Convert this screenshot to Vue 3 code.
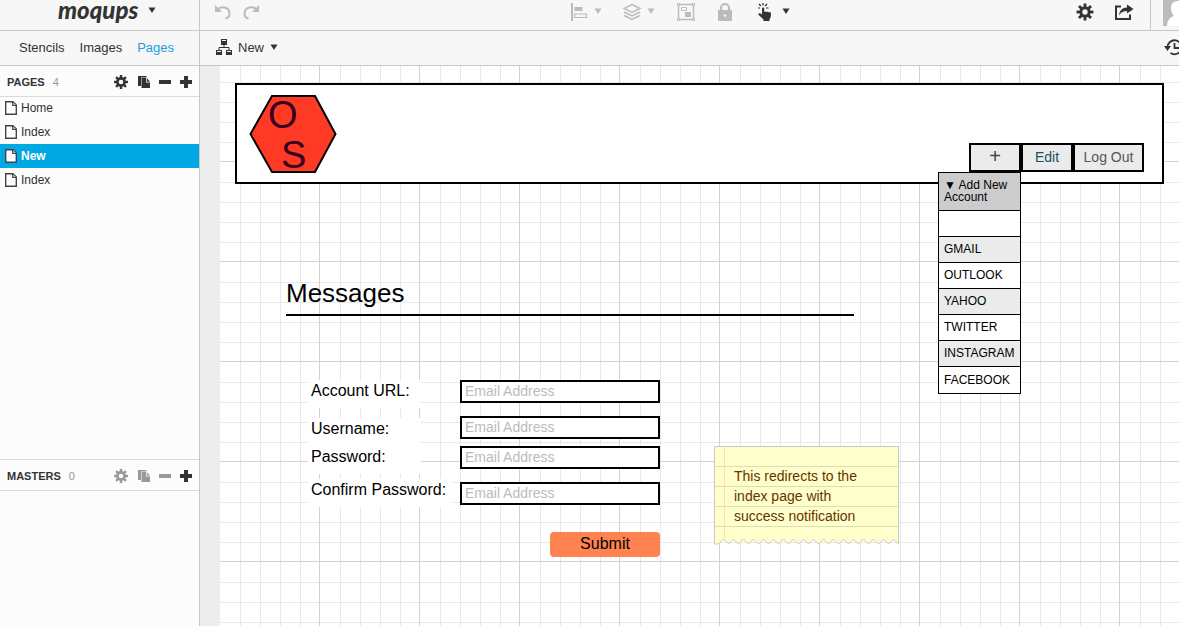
<script setup>
import { ref } from 'vue'

const gearTeeth = [0, 45, 90, 135, 180, 225, 270, 315]

const tabs = ['Stencils', 'Images', 'Pages']
const activeTab = ref('Pages')

const pages = ['Home', 'Index', 'New', 'Index']
const activePage = ref(2)

const panels = [
  { key: 'pages', title: 'PAGES', count: 4, muted: false, rows: pages },
  { key: 'masters', title: 'MASTERS', count: 0, muted: true, rows: [] },
]

const navButtons = ['+', 'Edit', 'Log Out']
const menuItems = ['', 'GMAIL', 'OUTLOOK', 'YAHOO', 'TWITTER', 'INSTAGRAM', 'FACEBOOK']

const fields = [
  { id: 'url', label: 'Account URL:', type: 'text', labelTop: 314, top: 314, width: 113 },
  { id: 'user', label: 'Username:', type: 'text', labelTop: 352, top: 350, width: 113 },
  { id: 'pass', label: 'Password:', type: 'password', labelTop: 380, top: 380, width: 113 },
  { id: 'confirm', label: 'Confirm Password:', type: 'password', labelTop: 413, top: 416, width: 144 },
]

const tornEdge = Array.from({ length: 37 }, (_, i) => `L${184.5 - i * 5} ${i % 2 ? 93 : 98}`).join(' ')
</script>

<template>
  <div class="app">
    <aside class="side">
      <button class="brand" type="button">
        <span class="wordmark">moqups</span>
        <svg class="caret" viewBox="0 0 8 6"><path d="M0.5 0.5h7L4 6z" /></svg>
      </button>
      <nav class="tabs">
        <a
          v-for="tab in tabs"
          :key="tab"
          href="#"
          :class="{ on: tab === activeTab }"
          @click.prevent="activeTab = tab"
        >{{ tab }}</a>
      </nav>
      <section v-for="panel in panels" :key="panel.key" :class="['panel', panel.key]">
        <header class="panel-head">
          <h2>{{ panel.title }}</h2>
          <span class="count">{{ panel.count }}</span>
          <div class="tools">
            <button type="button" aria-label="Settings" :class="{ muted: panel.muted }">
              <svg width="16" height="14" viewBox="0 0 16 14">
                <g transform="translate(7 7)">
                  <circle r="3.6" fill="none" stroke="currentColor" stroke-width="2.6" />
                  <rect v-for="a in gearTeeth" :key="a" x="-1.2" y="-7" width="2.4" height="3" :transform="`rotate(${a})`" />
                </g>
              </svg>
            </button>
            <button type="button" aria-label="Duplicate" :class="{ muted: panel.muted }">
              <svg width="14" height="14" viewBox="0 0 14 14">
                <path d="M1 1h8.500v1.500H4V11H1z" />
                <path d="M4.500 3H9v4.500h4V13H4.500zM9.700 3L13 6.700H9.700z" />
              </svg>
            </button>
            <button type="button" aria-label="Remove" :class="{ muted: panel.muted }">
              <svg width="14" height="14" viewBox="0 0 14 14"><path d="M1 5h12v4H1z" /></svg>
            </button>
            <button type="button" aria-label="Add">
              <svg width="14" height="14" viewBox="0 0 14 14"><path d="M5 1h4v4h4v4H9v4H5V9H1V5h4z" /></svg>
            </button>
          </div>
        </header>
        <ul class="rows">
          <li v-for="(name, i) in panel.rows" :key="i">
            <button type="button" :class="{ on: i === activePage }" @click="activePage = i">
              <svg width="12" height="14" viewBox="0 0 12 14">
                <path d="M.7.7h7.3l3.3 3.3v9.3H.7z" fill="#fff" stroke="#444" stroke-width="1.4" />
                <path d="M7.5.7v3.8h3.8" fill="#bbb" stroke="#444" />
              </svg>
              {{ name }}
            </button>
          </li>
        </ul>
      </section>
    </aside>

    <div class="work">
      <div class="toolbar">
        <div class="history">
          <button type="button" aria-label="Undo">
            <svg width="18" height="16" viewBox="0 0 18 16">
              <path d="M3.5 5.5C7 1.5 15.5 3 15.5 9.500C15.500 12 14 14 11.500 14.500" fill="none" stroke="#bbb" stroke-width="2" />
              <path d="M1 1v7h7z" fill="#bbb" />
            </svg>
          </button>
          <button type="button" aria-label="Redo">
            <svg width="18" height="16" viewBox="0 0 18 16">
              <path d="M14.500 5.500C11 1.500 2.500 3 2.500 9.500C2.500 12 4 14 6.500 14.500" fill="none" stroke="#bbb" stroke-width="2" />
              <path d="M17 1v7h-7z" fill="#bbb" />
            </svg>
          </button>
        </div>
        <div class="arrange">
          <button type="button" aria-label="Align" class="dim">
            <svg width="20" height="20" viewBox="0 0 20 20">
              <path d="M1 1h2v18H1zM4.500 5h8v4h-8z" />
              <path d="M4.500 12h12v3.500h-12z" fill="none" stroke="currentColor" stroke-width="1.200" />
            </svg>
            <svg class="caret" viewBox="0 0 8 6"><path d="M0.5 0.5h7L4 6z" /></svg>
          </button>
          <button type="button" aria-label="Order" class="dim">
            <svg width="20" height="20" viewBox="0 0 20 20">
              <g fill="none" stroke="currentColor" stroke-width="1.500">
                <path d="M9 2.500l8 4-8 4-8-4z" />
                <path d="M1 10l8 4 8-4M1 13.500l8 4 8-4" />
              </g>
            </svg>
            <svg class="caret" viewBox="0 0 8 6"><path d="M0.5 0.5h7L4 6z" /></svg>
          </button>
          <button type="button" aria-label="Group" class="dim">
            <svg width="20" height="20" viewBox="0 0 20 20">
              <g fill="#f7f7f7" stroke="currentColor">
                <path d="M2.500 2.500h15v15h-15z" stroke-width="1.400" />
                <path d="M1.500 1.500h2v2h-2zM16.500 1.500h2v2h-2zM1.500 16.500h2v2h-2zM16.500 16.500h2v2h-2zM5.500 5.500h5v3h-5z" />
              </g>
              <path d="M9 10h6v5H9z" />
            </svg>
          </button>
          <button type="button" aria-label="Lock" class="dim">
            <svg width="20" height="20" viewBox="0 0 20 20">
              <path d="M4 9V6a4 4 0 0 1 8 0v3" fill="none" stroke="currentColor" stroke-width="2.200" />
              <rect x="1" y="8" width="14" height="11" rx="1" />
              <circle cx="8" cy="13.500" r="1.300" fill="#f7f7f7" />
            </svg>
          </button>
          <button type="button" aria-label="Interact">
            <svg width="20" height="20" viewBox="0 0 20 20">
              <path d="M4 6.500c0-1.500 2.200-1.500 2.200 0V10l.8-.6 1.300.7.900-.5 1.300.7 1-.2c1.200.2 1.500 1 1.500 2.200 0 3-.8 4-1.500 5V19H5.500v-1.500L.5 12.800C0 11.500 1.500 10.900 2.500 11.600L4 12.500z" />
              <path d="M5 1v2.500M1 2l1.800 2M9 2L7.200 4M-.5 6h2.500M8 6h2.500" fill="none" stroke="currentColor" stroke-width="1.200" />
            </svg>
            <svg class="caret" viewBox="0 0 8 6"><path d="M0.5 0.5h7L4 6z" /></svg>
          </button>
        </div>
        <div class="account">
          <button type="button" aria-label="Preferences">
            <svg width="18" height="18" viewBox="-9 -9 18 18">
              <circle r="4.200" fill="none" stroke="currentColor" stroke-width="3" />
              <rect v-for="a in gearTeeth" :key="a" x="-1.400" y="-8.500" width="2.800" height="4" :transform="`rotate(${a})`" />
            </svg>
          </button>
          <button type="button" aria-label="Share">
            <svg width="20" height="18" viewBox="0 0 20 18">
              <path d="M7 3.500H2v12.500h14V11.500" fill="none" stroke="currentColor" stroke-width="2" />
              <path d="M13 1.500l6.500 4.500-6.500 4.500V8C9.500 8 7 9 5 12.500 5.500 7.500 8.500 4.500 13 4.500z" />
            </svg>
          </button>
          <button type="button" aria-label="Profile" class="avatar">
            <svg width="28" height="27" viewBox="0 0 28 27">
              <path d="M0 0h28v26H0z" fill="#bcbcbc" />
              <path d="M4 26c0-5 3-9 7-10-2-2-3-5-3-8 0-5 3-7 7-7s7 3 7 7-1 6-3 8c4 1 6 5 6 10z" fill="#fff" />
            </svg>
          </button>
        </div>
      </div>

      <div class="pagebar">
        <button type="button" class="page-picker">
          <svg width="16" height="16" viewBox="0 0 16 16">
            <path d="M5 0h6v6H5zM0 11h6v5H0zM10 11h6v5h-6z" />
            <path d="M6 1.500h4M1 12.500h4M11 12.500h4" stroke="#f7f7f7" />
            <path d="M8 6v2.500M3 11V8.500h10V11" fill="none" stroke="currentColor" />
          </svg>
          New
          <svg class="caret" viewBox="0 0 8 6"><path d="M0.5 0.5h7L4 6z" /></svg>
        </button>
        <button type="button" aria-label="Revisions" class="revisions">
          <svg width="20" height="18" viewBox="0 0 20 18">
            <path d="M3.500 9.500A7 7 0 1 1 6.500 15" fill="none" stroke="currentColor" stroke-width="1.800" />
            <path d="M0 8h7l-3.500 5z" />
            <path d="M10.500 5v5H15" fill="none" stroke="currentColor" stroke-width="1.800" />
          </svg>
        </button>
      </div>

      <main class="stage">
        <div class="paper">
          <div class="banner"></div>
          <svg class="badge" width="90" height="82" viewBox="0 0 90 82">
            <path d="M2.500 41L24 3h43l20.500 38L67 79H24z" fill="#ff3a24" stroke="#000" stroke-width="2" />
            <text x="20" y="35">O</text>
            <text x="33" y="75">S</text>
          </svg>
          <nav class="site-nav">
            <button v-for="label in navButtons" :key="label" type="button">{{ label }}</button>
          </nav>
          <div class="menu">
            <button type="button" class="menu-head">▼ Add New Account</button>
            <button v-for="item in menuItems" :key="item" type="button">{{ item }}</button>
          </div>
          <h1>Messages</h1>
          <form @submit.prevent>
            <template v-for="f in fields" :key="f.id">
              <label :for="f.id" :style="{ top: f.labelTop + 'px', width: f.width + 'px' }">{{ f.label }}</label>
              <input :id="f.id" :type="f.type" placeholder="Email Address" :style="{ top: f.top + 'px' }" />
            </template>
            <button type="submit" class="submit">Submit</button>
          </form>
          <div class="note">
            <svg width="185" height="100" viewBox="0 0 185 100">
              <path :d="`M.5 98V.5H184.500V93 ${tornEdge}Z`" fill="#ffffcb" stroke="#c8c8c0" />
              <path d="M1 20.500h183M1 40.500h183M1 60.500h183M1 80.500h183" stroke="#dedeb4" />
              <path d="M10.500 1v93" stroke="#ffdfae" />
            </svg>
            <p>This redirects to the index page with success notification</p>
          </div>
        </div>
      </main>
    </div>
  </div>
</template>

<style>
body {
  margin: 0;
  overflow: hidden;
}
</style>

<style scoped>
.app {
  display: flex;
  height: 100vh;
  overflow: hidden;
  background: #f7f7f7;
  color: #333;
  font-family: "Liberation Sans", Arial, sans-serif;
  font-size: 13px;
}
.app * {
  box-sizing: border-box;
}
button {
  display: flex;
  align-items: center;
  padding: 0;
  border: 0;
  background: none;
  color: inherit;
  font: inherit;
}
svg {
  display: block;
  flex: none;
  fill: currentColor;
}
.caret {
  width: 8px;
  height: 6px;
}

/* sidebar */
.side {
  display: flex;
  flex: 0 0 200px;
  flex-direction: column;
  border-right: 1px solid #c8c8c8;
}
.brand {
  flex: none;
  gap: 10px;
  height: 31px;
  padding: 0 0 10px 58px;
  border-bottom: 1px solid #c8c8c8;
}
.wordmark {
  font-family: Lato, sans-serif;
  font-size: 24px;
  font-style: italic;
  font-weight: 900;
  line-height: 20px;
}
.tabs {
  display: flex;
  flex: none;
  align-items: center;
  gap: 15px;
  height: 35px;
  padding: 0 0 2px 19px;
  border-bottom: 1px solid #c8c8c8;
}
.tabs a {
  color: #333;
  text-decoration: none;
}
.tabs .on {
  color: #1a9fe0;
}
.panel {
  background: #fcfcfc;
}
.pages {
  flex: 1;
}
.masters {
  flex: 0 0 167px;
  border-top: 1px solid #dadada;
}
.panel-head {
  display: flex;
  align-items: center;
  height: 30px;
  padding: 2px 6px 0 7px;
  box-shadow: 0 1px #dadada;
}
h2 {
  margin: 0;
  font-size: 11px;
  font-weight: 700;
}
.count {
  margin-left: 8px;
  color: #999;
  font-size: 11px;
}
.tools {
  display: flex;
  gap: 7px;
  margin-left: auto;
}
.muted {
  color: #999;
}
.rows {
  margin: 0;
  padding: 0;
  list-style: none;
}
.rows button {
  gap: 4px;
  width: 100%;
  height: 24px;
  padding-left: 5px;
  font-size: 12px;
}
.rows .on {
  background: #00a9e4;
  color: #fff;
  font-weight: 700;
}

/* bars over the canvas */
.work {
  display: flex;
  flex: 1;
  flex-direction: column;
  min-width: 0;
}
.toolbar {
  display: flex;
  flex: none;
  height: 31px;
  padding-left: 14px;
  border-bottom: 1px solid #c8c8c8;
}
.history,
.arrange,
.account {
  display: flex;
  align-items: center;
  height: 24px;
}
.history {
  gap: 10px;
}
.arrange {
  gap: 21px;
  margin-left: 310px;
}
.arrange button {
  gap: 4px;
}
.arrange .caret {
  margin-bottom: 2px;
}
.dim {
  color: #bbb;
}
.account {
  gap: 20px;
  height: 30px;
  margin-left: auto;
}
.account button {
  padding-bottom: 6px;
}
.account .avatar {
  align-items: flex-start;
  width: 29px;
  height: 30px;
  margin-left: -4px;
  padding: 0 0 0 12px;
  overflow: hidden;
  border-left: 1px solid #c8c8c8;
}
.pagebar {
  display: flex;
  flex: none;
  align-items: center;
  justify-content: space-between;
  height: 35px;
  padding: 0 0 2px 16px;
  border-bottom: 1px solid #c8c8c8;
}
.page-picker {
  gap: 6px;
}
.revisions {
  width: 15px;
  overflow: hidden;
}

/* canvas */
.stage {
  flex: 1;
  min-height: 0;
  padding-left: 20px;
  background: #ededed;
}
.paper {
  position: relative;
  height: 100%;
  overflow: hidden;
  background-color: #fff;
  background-image:
    linear-gradient(to right, transparent 99px, #d2d2d2 99px),
    linear-gradient(to bottom, transparent 99px, #d2d2d2 99px),
    linear-gradient(to right, transparent 20px, #e8e8e8 20px, #e8e8e8 21px, transparent 21px, transparent 40px, #e8e8e8 40px, #e8e8e8 41px, transparent 41px, transparent 60px, #e8e8e8 60px, #e8e8e8 61px, transparent 61px, transparent 80px, #e8e8e8 80px, #e8e8e8 81px, transparent 81px),
    linear-gradient(to bottom, transparent 20px, #e8e8e8 20px, #e8e8e8 21px, transparent 21px, transparent 40px, #e8e8e8 40px, #e8e8e8 41px, transparent 41px, transparent 60px, #e8e8e8 60px, #e8e8e8 61px, transparent 61px, transparent 80px, #e8e8e8 80px, #e8e8e8 81px, transparent 81px);
  background-position: 0 -4px;
  background-size: 100px 100px;
  color: #000;
}
.banner {
  position: absolute;
  top: 17px;
  right: 15px;
  left: 15px;
  height: 101px;
  border: 2px solid #000;
  background: #fff;
}
.badge {
  position: absolute;
  top: 27px;
  left: 28px;
}
.badge text {
  fill: #33001f;
  font-size: 38px;
}
.site-nav {
  position: absolute;
  top: 77px;
  right: 35px;
  display: flex;
}
.site-nav button {
  justify-content: center;
  width: 52px;
  height: 29px;
  padding-bottom: 2px;
  border: 2px solid #000;
  background: #ebebeb;
  color: #444;
  font-size: 14px;
}
.site-nav button:first-child {
  font-size: 20px;
}
.site-nav button:nth-child(2) {
  color: #1d4f5e;
}
.site-nav button:last-child {
  width: 71px;
  color: #555;
}
.menu {
  position: absolute;
  top: 106px;
  right: 158px;
  width: 83px;
  border: 1px solid #000;
  background: #fff;
}
.menu button {
  width: 100%;
  height: 26px;
  padding: 0 0 2px 5px;
  border-bottom: 1px solid #000;
  font-size: 12px;
  line-height: 12px;
  text-align: left;
}
.menu .menu-head {
  height: 38px;
  background: #ccc;
}
.menu button:nth-child(2n + 3) {
  background: #ebebeb;
}
.menu button:last-child {
  padding-bottom: 0;
  border-bottom: 0;
}
h1 {
  position: absolute;
  top: 212px;
  left: 66px;
  width: 568px;
  height: 38px;
  margin: 0;
  border-bottom: 2px solid #000;
  font-size: 26px;
  font-weight: 400;
  line-height: 30px;
}
label {
  position: absolute;
  left: 88px;
  height: 28px;
  padding-left: 3px;
  background: #fff;
  font-size: 16px;
  line-height: 22px;
}
input {
  position: absolute;
  left: 240px;
  width: 200px;
  height: 23px;
  padding: 0 3px 2px;
  border: 2px solid #000;
  border-radius: 0;
  background: #fff;
  font: inherit;
  font-size: 14px;
}
input::placeholder {
  color: #bbb;
}
.submit {
  position: absolute;
  top: 466px;
  left: 330px;
  justify-content: center;
  width: 110px;
  height: 25px;
  padding-bottom: 2px;
  border-radius: 4px;
  background: #ff8350;
  font-size: 16px;
}
.note {
  position: absolute;
  top: 380px;
  left: 494px;
  width: 185px;
}
.note p {
  position: absolute;
  top: 20px;
  left: 20px;
  width: 140px;
  margin: 0;
  color: #663300;
  font-size: 14px;
  line-height: 20px;
}
</style>
